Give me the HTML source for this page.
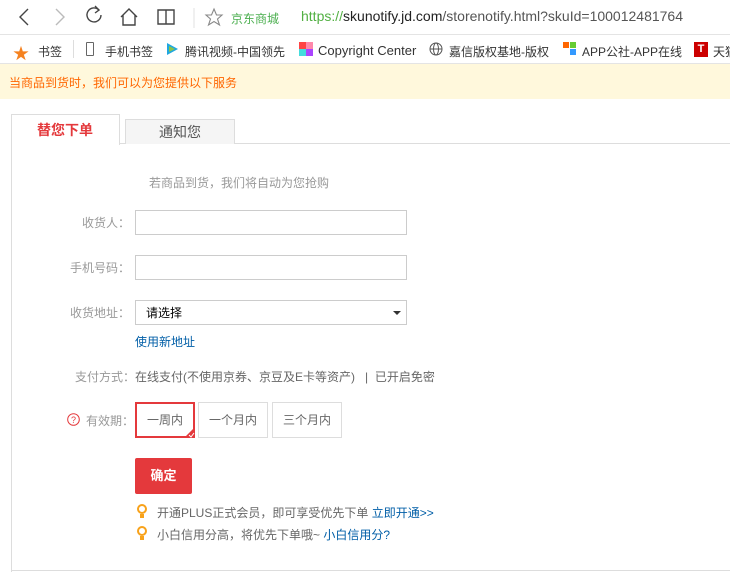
<!DOCTYPE html>
<html><head><meta charset="utf-8"><style>
*{margin:0;padding:0;box-sizing:border-box}
body{width:730px;height:572px;overflow:hidden;background:#fff;font-family:"Liberation Sans","Noto Sans CJK SC",sans-serif;font-size:12px;color:#666;position:relative}
.a{position:absolute;white-space:nowrap}
.inp{position:absolute;left:135px;width:272px;height:25px;border:1px solid #ccc;background:#fff}
.lab{position:absolute;right:600px;color:#999;font-size:12px;text-align:right}
.opt{position:absolute;top:402px;height:36px;border:1px solid #ddd;color:#666;font-size:12px;text-align:center;line-height:34px}
</style></head><body>
<!-- toolbar -->
<div class="a" style="left:0;top:0;width:730px;height:35px;border-bottom:1px solid #e4e4e4"></div>
<svg class="a" style="left:0;top:0" width="230" height="35">
<g fill="none" stroke="#444" stroke-width="1.4">
<path d="M28 9 L20 17 L28 25"/>
<path d="M56 9 L64 17 L56 25" stroke="#bbb"/>
<path d="M99 10 A7 7 0 1 0 101 15"/><path d="M95 6 L99 10 L95 13"/>
<path d="M121 17 L129 9 L137 17 M123 15 V25 H135 V15"/>
<path d="M158 10 H166 V24 H158 Z M166 10 H174 V24 H166"/>
<path d="M214 9 L216.5 15 H222 L217.5 19 L219.5 25 L214 21.5 L208.5 25 L210.5 19 L206 15 H211.5 Z" stroke="#888" stroke-width="1.1"/>
</g><line x1="194" y1="8" x2="194" y2="28" stroke="#e0e0e0"/></svg>
<div class="a" style="left:231px;top:10px;font-size:12px;color:#4caf50">京东商城</div>
<div class="a" style="left:301px;top:8px;font-size:14px;color:#555"><span style="color:#52b043">https://</span><span style="color:#222">skunotify.jd.com</span>/storenotify.html?skuId=100012481764</div>
<!-- bookmarks -->
<div class="a" style="left:0;top:36px;width:730px;height:28px;border-bottom:1px solid #e4e4e4"></div>
<div class="a" style="left:13px;top:40px;color:#f58220;font-size:16px">★</div>
<div class="a" style="left:38px;top:43px;color:#333;font-size:12px">书签</div>
<div class="a" style="left:73px;top:40px;width:1px;height:18px;background:#ddd"></div>
<div class="a" style="left:86px;top:42px;width:8px;height:14px;border:1px solid #666;border-radius:1px"></div>
<div class="a" style="left:105px;top:43px;color:#333">手机书签</div>
<svg class="a" style="left:164px;top:41px" width="16" height="16"><path d="M3 2 L14 8 L3 14 Z" fill="#1fa7e0"/><path d="M5 5 L11 8 L5 11Z" fill="#8bc34a"/></svg>
<div class="a" style="left:185px;top:43px;color:#333">腾讯视频-中国领先</div>
<svg class="a" style="left:299px;top:42px" width="14" height="14"><rect x="0" y="0" width="7" height="7" fill="#f44"/><rect x="7" y="0" width="7" height="7" fill="#f8a"/><rect x="0" y="7" width="7" height="7" fill="#4dd"/><rect x="7" y="7" width="7" height="7" fill="#a4f"/></svg>
<div class="a" style="left:318px;top:43px;color:#333;font-size:13px">Copyright Center</div>
<svg class="a" style="left:429px;top:42px" width="14" height="14" fill="none" stroke="#555"><circle cx="7" cy="7" r="6"/><ellipse cx="7" cy="7" rx="2.5" ry="6"/><path d="M1 7H13"/></svg>
<div class="a" style="left:449px;top:43px;color:#333">嘉信版权基地-版权</div>
<svg class="a" style="left:563px;top:42px" width="14" height="14"><rect x="0" y="0" width="6" height="6" fill="#f60"/><rect x="7" y="0" width="6" height="6" fill="#6c3"/><rect x="7" y="7" width="6" height="6" fill="#39f"/></svg>
<div class="a" style="left:582px;top:43px;color:#333">APP公社-APP在线</div>
<div class="a" style="left:694px;top:42px;width:14px;height:15px;background:#c00;color:#fff;font-size:11px;font-weight:bold;text-align:center;line-height:15px">T</div>
<div class="a" style="left:713px;top:43px;color:#333">天猫</div>
<!-- yellow -->
<div class="a" style="left:0;top:64px;width:730px;height:35px;background:#fff8dc"></div>
<div class="a" style="left:9px;top:74px;color:#f60;font-size:12px">当商品到货时，我们可以为您提供以下服务</div>
<!-- tabs / content box -->
<div class="a" style="left:119px;top:143px;width:611px;height:1px;background:#ddd"></div>
<div class="a" style="left:11px;top:114px;width:1px;height:458px;background:#ddd"></div>
<div class="a" style="left:11px;top:570px;width:719px;height:1px;background:#ddd"></div>
<div class="a" style="left:11px;top:114px;width:109px;height:31px;background:#fff;border:1px solid #ddd;border-bottom:none"></div>
<div class="a" style="left:37px;top:120px;color:#e4393c;font-size:14px;font-weight:bold">替您下单</div>
<div class="a" style="left:125px;top:119px;width:110px;height:25px;background:#f5f5f5;border:1px solid #ddd;border-bottom:none;text-align:center;color:#555;font-size:14px;line-height:24px">通知您</div>
<!-- form -->
<div class="a" style="left:149px;top:174px;color:#999">若商品到货，我们将自动为您抢购</div>
<div class="lab" style="top:214px">收货人：</div>
<div class="inp" style="top:210px"></div>
<div class="lab" style="top:259px">手机号码：</div>
<div class="inp" style="top:255px"></div>
<div class="lab" style="top:304px">收货地址：</div>
<div class="inp" style="top:300px"></div>
<div class="a" style="left:146px;top:304px;color:#000;font-size:12px">请选择</div>
<div class="a" style="left:393px;top:311px;border-left:4px solid transparent;border-right:4px solid transparent;border-top:4px solid #333"></div>
<div class="a" style="left:135px;top:333px;color:#005ea7">使用新地址</div>
<div class="a" style="left:75px;top:368px;color:#999">支付方式：<span style="color:#666">在线支付(不使用京券、京豆及E卡等资产)</span>&nbsp;&nbsp; <span style="color:#666">|</span>&nbsp;&nbsp;<span style="color:#666">已开启免密</span></div>
<svg class="a" style="left:67px;top:413px" width="13" height="13"><circle cx="6.5" cy="6.5" r="5.8" fill="none" stroke="#e4393c"/><text x="6.5" y="10" font-size="9" text-anchor="middle" fill="#e4393c" font-family="Liberation Sans">?</text></svg>
<div class="a" style="left:86px;top:412px;color:#999">有效期：</div>
<div class="opt" style="left:135px;width:60px;border:2px solid #e4393c;line-height:32px">一周内</div>
<svg class="a" style="left:184px;top:427px" width="11" height="11"><path d="M11 0 V11 H0 Z" fill="#e4393c"/><path d="M5 8 L7 10 L10 6" stroke="#fff" fill="none"/></svg>
<div class="opt" style="left:198px;width:70px">一个月内</div>
<div class="opt" style="left:272px;width:70px">三个月内</div>
<div class="a" style="left:135px;top:458px;width:57px;height:36px;background:#e4393c;border-radius:2px;color:#fff;font-weight:bold;font-size:13px;text-align:center;line-height:36px">确定</div>
<svg class="a" style="left:136px;top:504px" width="12" height="36" fill="none" stroke="#f8a21a" stroke-width="2"><circle cx="6" cy="5" r="4"/><path d="M4 11H8M4 13H8"/><circle cx="6" cy="27" r="4"/><path d="M4 33H8M4 35H8"/></svg>
<div class="a" style="left:157px;top:504px;color:#666">开通PLUS正式会员，即可享受优先下单 <span style="color:#005ea7">立即开通&gt;&gt;</span></div>
<div class="a" style="left:157px;top:526px;color:#666">小白信用分高，将优先下单哦~ <span style="color:#005ea7">小白信用分?</span></div>
</body></html>
